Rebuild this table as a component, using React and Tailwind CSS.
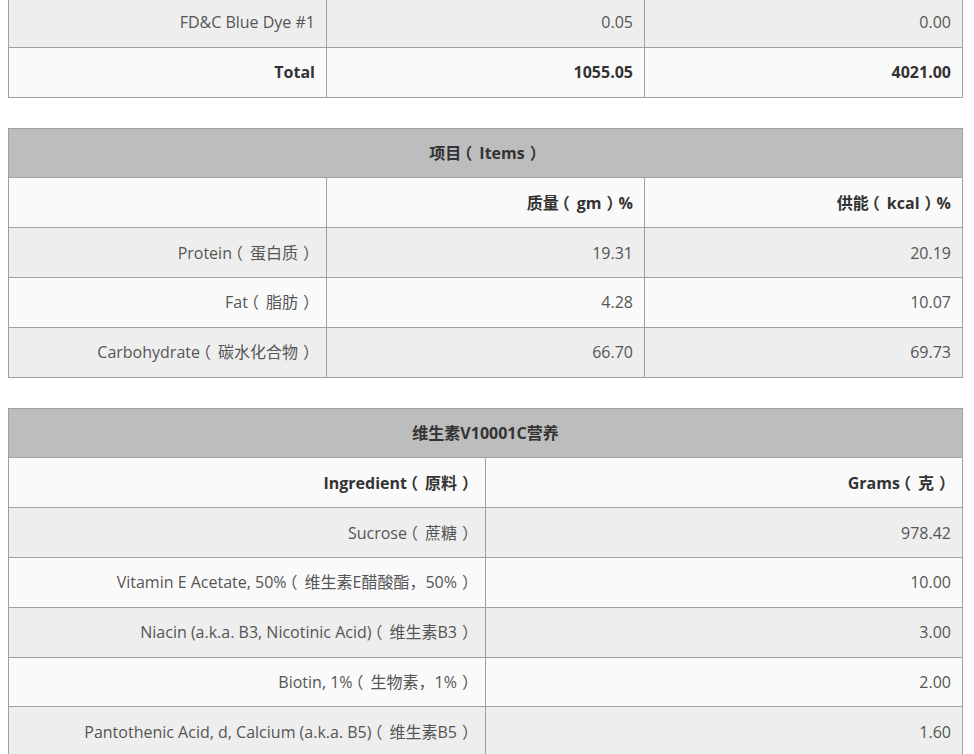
import React from 'react';

const font = { fontFamily: '"Open Sans", "Noto Sans CJK SC", sans-serif' };

// full-width parens sit off-centre in Noto CJK; use the half-width form and space it out
function Text({ children }) {
  if (typeof children !== 'string') return children;
  const parts = children.split(/([（）])/);
  return parts.map((p, i) => {
    if (p === '（')
      return (
        <span key={i} className="ml-[3px] mr-[7px] [font-feature-settings:'halt']">
          （
        </span>
      );
    if (p === '）')
      return (
        <span key={i} className="ml-[5px] mr-[4px] [font-feature-settings:'halt']">
          ）
        </span>
      );
    return p;
  });
}

function Cell({ children, bold }) {
  return (
    <td
      className={`h-[49.8px] border border-[#a0a0a0] px-[11px] py-0 text-right align-middle text-[16px] leading-[22px] ${
        bold ? 'font-bold text-[#333]' : 'text-[#555]'
      }`}
    >
      <Text>{children}</Text>
    </td>
  );
}

function Row({ cells, odd, bold }) {
  return (
    <tr className={odd ? 'bg-[#eeeeee]' : 'bg-[#fafafa]'}>
      {cells.map((c, i) => (
        <Cell key={i} bold={bold}>
          {c}
        </Cell>
      ))}
    </tr>
  );
}

function Title({ span, children }) {
  return (
    <tr className="bg-[#bdbdbd]">
      <td
        colSpan={span}
        className="h-[49.8px] border border-[#a0a0a0] text-center align-middle text-[16px] font-bold text-[#333]"
      >
        <Text>{children}</Text>
      </td>
    </tr>
  );
}

const macros = [
  ['Protein（蛋白质）', '19.31', '20.19'],
  ['Fat（脂肪）', '4.28', '10.07'],
  ['Carbohydrate（碳水化合物）', '66.70', '69.73'],
];

const vitamins = [
  ['Sucrose（蔗糖）', '978.42'],
  ['Vitamin E Acetate, 50%（维生素E醋酸酯，50%）', '10.00'],
  ['Niacin (a.k.a. B3, Nicotinic Acid)（维生素B3）', '3.00'],
  ['Biotin, 1%（生物素，1%）', '2.00'],
  ['Pantothenic Acid, d, Calcium (a.k.a. B5)（维生素B5）', '1.60'],
];

export default function App() {
  return (
    <div className="h-[754px] overflow-hidden bg-white pl-[8px]" style={font}>
      {/* tail of the previous table */}
      <table className="-mt-[3px] w-[955px] table-fixed border-collapse">
        <tbody>
          <Row cells={['FD&C Blue Dye #1', '0.05', '0.00']} odd />
          <Row cells={['Total', '1055.05', '4021.00']} bold />
        </tbody>
      </table>

      <table className="mt-[30px] w-[955px] table-fixed border-collapse">
        <tbody>
          <Title span={3}>项目（Items）</Title>
          <Row cells={['', '质量（gm）%', '供能（kcal）%']} bold />
          {macros.map((r, i) => (
            <Row key={r[0]} cells={r} odd={i % 2 === 0} />
          ))}
        </tbody>
      </table>

      <table className="mt-[30px] w-[955px] table-fixed border-collapse">
        <tbody>
          <Title span={2}>维生素V10001C营养</Title>
          <Row cells={['Ingredient（原料）', 'Grams（克）']} bold />
          {vitamins.map((r, i) => (
            <Row key={r[0]} cells={r} odd={i % 2 === 0} />
          ))}
        </tbody>
      </table>
    </div>
  );
}
